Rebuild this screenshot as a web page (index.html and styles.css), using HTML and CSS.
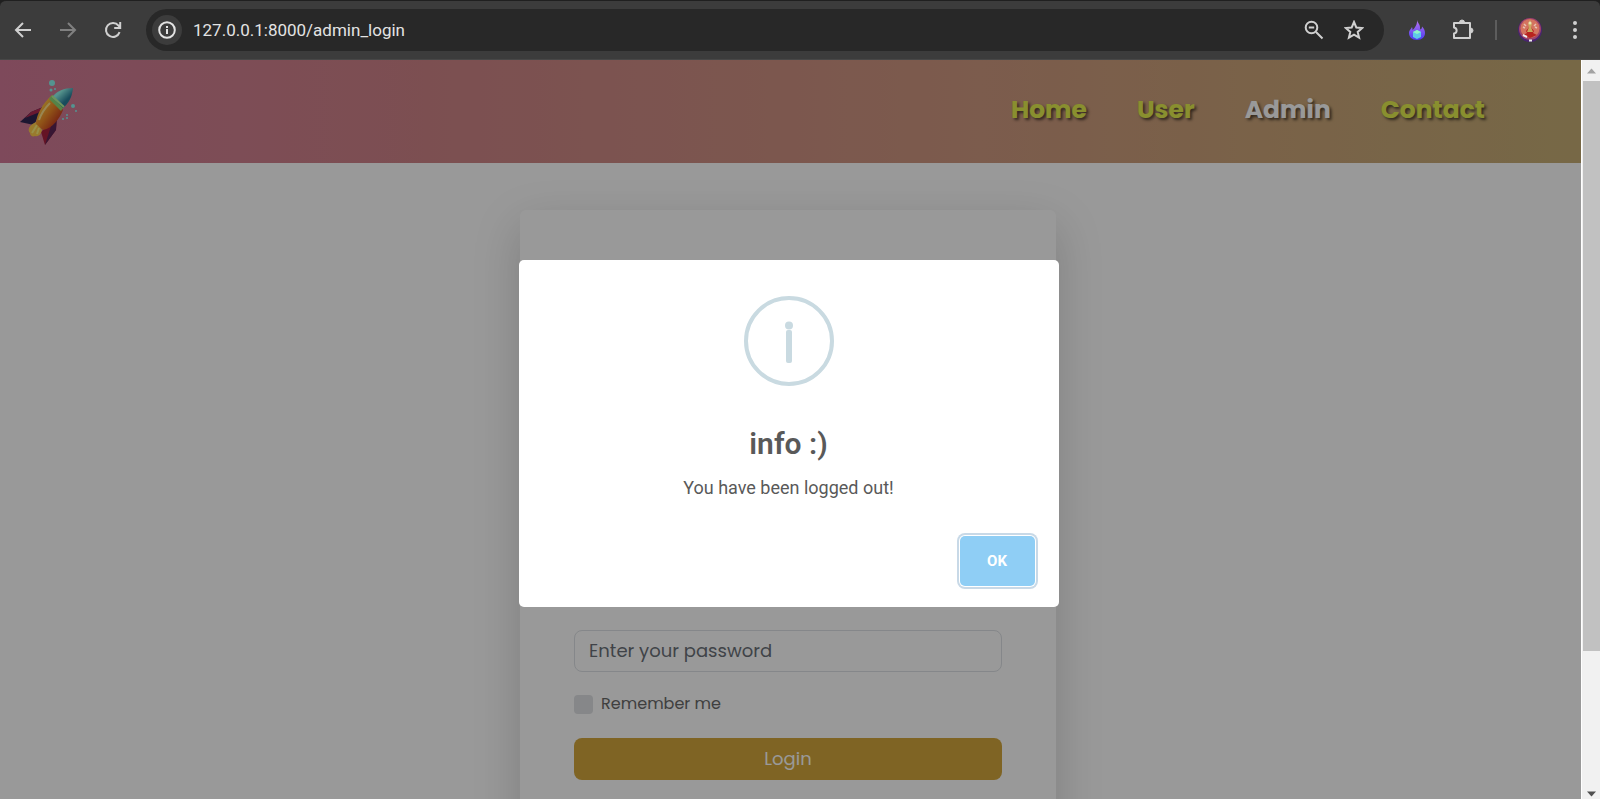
FILE: index.html
```html
<!DOCTYPE html>
<html lang="en">
<head>
<meta charset="utf-8">
<title>Admin Login</title>
<link rel="stylesheet" href="styles.css">
</head>
<body>
<div class="browser">
  <div class="toolbar">
    <div class="nav-buttons">
      <button class="tool" aria-label="Back"><svg width="18" height="18" viewBox="0 0 18 18"><path d="M17 9H2M9 2L2 9l7 7" fill="none" stroke="#d0d0d0" stroke-width="2"/></svg></button>
      <button class="tool" aria-label="Forward"><svg width="18" height="18" viewBox="0 0 18 18"><path d="M1 9h15M9 2l7 7-7 7" fill="none" stroke="#808080" stroke-width="2"/></svg></button>
      <button class="tool" aria-label="Reload"><svg width="18" height="18" viewBox="0 0 18 18"><path d="M15.600 11.200A7 7 0 1 1 14.500 4.600L16 6.300M16.200 1v6h-6" fill="none" stroke="#d0d0d0" stroke-width="2"/></svg></button>
    </div>
    <div class="omnibox">
      <button class="site-info" aria-label="Site information"><svg width="18" height="18" viewBox="0 0 18 18"><circle cx="9" cy="9" r="7.800" fill="none" stroke="#e3e3e3" stroke-width="2"/><path d="M8 8h2v5H8zM8 5h2v2H8z" fill="#e3e3e3"/></svg></button>
      <input class="url" type="text" aria-label="Address" value="127.0.0.1:8000/admin_login">
      <button class="tool" aria-label="Zoom"><svg width="20" height="20" viewBox="0 0 20 20"><g fill="none" stroke="#d0d0d0" stroke-width="2"><circle cx="7.500" cy="7.500" r="5.800"/><path d="M12 12l6.500 6.500M4.800 7.500h5.400"/></g></svg></button>
      <button class="tool" aria-label="Bookmark"><svg width="20" height="20" viewBox="0 0 20 20"><path d="M10 2l2.300 5.500 6 .5-4.600 3.900 1.400 5.800L10 14.600l-5.100 3.100 1.400-5.800L1.700 8l6-.5z" fill="none" stroke="#d0d0d0" stroke-width="2"/></svg></button>
    </div>
    <div class="extensions">
      <button class="tool" aria-label="Flame extension"><svg width="16" height="20" viewBox="0 0 16 20"><defs><linearGradient id="flame" x2="0" y2="1"><stop stop-color="#b873f0"/><stop offset="1" stop-color="#4b3df0"/></linearGradient></defs><path d="M8 0c0 2 3 4 3 7 0 1 0 2 .500 2.500C12.500 9 13 8 13 6.500c2 2 3 4 3 6.500 0 4-3 7-8 7s-8-3-8-7c0-3 2-3.500 3-6 .500 1 .500 2 .500 3C6 8 8.500 4 8 0z" fill="url(#flame)"/><path d="M8 10l4 2v5l-4 2-4-2v-5z" fill="#5fc8e8"/><path d="M8 10l4 2-4 2-4-2z" fill="#8ff5c8"/></svg></button>
      <button class="tool" aria-label="Extensions"><svg width="22" height="22" viewBox="0 0 22 22"><path d="M2 4h16v15H2v-4.500c3.500-.500 3.500-5.500 0-6z" fill="none" stroke="#d0d0d0" stroke-width="2" stroke-linejoin="round"/><path d="M7.500 3.500a2.500 2.500 0 0 1 5 0zM18.500 9a2.500 2.500 0 0 1 0 5z" fill="#d0d0d0" stroke="#d0d0d0"/></svg></button>
      <span class="divider"></span>
      <button class="tool" aria-label="Profile"><svg width="24" height="24" viewBox="0 0 24 24"><circle cx="12" cy="12" r="12" fill="#4a2470"/><circle cx="12" cy="11" r="11" fill="#a04468"/><circle cx="12" cy="10.500" r="9.500" fill="#d4735f"/><path d="M5 9l2 1M17 9l2 1M6 6l2 2M18 6l-2 2" stroke="#e8c0b0" stroke-width="1.500"/><path d="M12 8l4 5-1 2 4 2-7 3-7-3 4-2-1-2z" fill="#b8241f"/><path d="M12 2l2 4-1 3 2 5h-6l2-5-1-3z" fill="#c9a860"/><circle cx="12" cy="5" r="1.500" fill="#e8e0b0"/><path d="M5 17l4 2M11 22.500h3" stroke="#eee" stroke-width="2"/></svg></button>
      <button class="tool menu-button" aria-label="Menu"><svg width="4" height="18" viewBox="0 0 4 18"><g fill="#d0d0d0"><circle cx="2" cy="2" r="2"/><circle cx="2" cy="9" r="2"/><circle cx="2" cy="16" r="2"/></g></svg></button>
    </div>
  </div>
  <div class="viewport">
    <div class="page">
      <header class="site-header">
        <svg class="logo" width="60" height="68" viewBox="0 0 60 68">
          <defs>
            <linearGradient id="hull" x1="0" y1="0" x2="1" y2="1"><stop offset=".25" stop-color="#ffc43d"/><stop offset=".5" stop-color="#f08a28"/><stop offset=".8" stop-color="#c2381f"/></linearGradient>
            <linearGradient id="nose" x1="0" y1="0" x2="1" y2="1"><stop offset=".3" stop-color="#8ff5ea"/><stop offset=".65" stop-color="#287f9a"/></linearGradient>
          </defs>
          <path d="M24 29L12 34 1 44l14 3z" fill="#312652"/><path d="M24 29L12 34 6 40l15-6z" fill="#b02951"/>
          <path d="M22 54l4 13 11-15 1-14z" fill="#a8213e"/><path d="M26 67l11-15 1-14-6 10z" fill="#5c2556"/>
          <path d="M17 44c-7 3-9 8-6 11 0 3 3 4 5 3 3 1 6-1 7-6z" fill="#ffcb4c"/><path d="M18 47l-5 8M20 50l-2 6" stroke="#fff07a" stroke-width="2"/>
          <path d="M33 17C24 25 17 37 17 46l7 6c10-2 17-12 20-20z" fill="url(#hull)"/>
          <path d="M31 25c-6 6-9 11-11 17" fill="none" stroke="#ffe08a" stroke-width="2"/>
          <path d="M33 17l-3 4 12 12 3-5z" fill="#8fdb75"/>
          <path d="M54 10c-9 0-16 3-21 9l11 11c6-5 9-11 10-20z" fill="url(#nose)"/>
          <path d="M33 18l12 11" stroke="#b8f59a" stroke-width="2"/>
          <g fill="#8cf5f0"><circle cx="33" cy="5" r="3"/><circle cx="32" cy="12" r="1.500"/><circle cx="36" cy="11" r="1"/><circle cx="54" cy="28" r="2"/><circle cx="57" cy="33" r="1"/><circle cx="44" cy="41" r="1"/><circle cx="48" cy="40" r="1"/><circle cx="48" cy="37" r="1"/></g>
        </svg>
        <nav class="menu">
          <a href="#">Home</a>
          <a href="#">User</a>
          <a href="#" class="active">Admin</a>
          <a href="#">Contact</a>
        </nav>
      </header>
      <main class="content">
        <form class="card">
          <input class="field" type="password" placeholder="Enter your password" aria-label="Password">
          <div class="remember">
            <input type="checkbox" id="remember">
            <label for="remember">Remember me</label>
          </div>
          <button class="login" type="button">Login</button>
        </form>
      </main>
      <div class="overlay">
        <div class="modal" role="dialog" aria-labelledby="modal-title">
          <svg class="modal-icon" width="90" height="90" viewBox="0 0 90 90"><circle cx="45" cy="45" r="43" fill="none" stroke="#c9dae1" stroke-width="4"/><circle cx="45" cy="29.500" r="4" fill="#c9dae1"/><rect x="42" y="34" width="6" height="33" rx="2" fill="#c9dae1"/></svg>
          <h2 class="modal-title" id="modal-title">info :)</h2>
          <p class="modal-text">You have been logged out!</p>
          <div class="modal-footer"><button class="ok">OK</button></div>
        </div>
      </div>
    </div>
    <div class="scrollbar">
      <svg class="arrow" width="18" height="21" viewBox="0 0 18 21"><path d="M5 13.500l4.500-5 4.500 5z" fill="#a3a3a3"/></svg>
      <div class="track"><div class="thumb"></div></div>
      <svg class="arrow" width="18" height="10" viewBox="0 0 18 10"><path d="M5 2.500l4.500 5 4.500-5z" fill="#505050"/></svg>
    </div>
  </div>
</div>
</body>
</html>
```
FILE: styles.css
```css
* { box-sizing: border-box; }
body { margin: 0; font-family: Poppins, Inter, "Liberation Sans", sans-serif; }
button { border: 0; padding: 0; background: none; font-family: inherit; }
svg { display: block; }

.browser { display: flex; flex-direction: column; height: 100vh; overflow: hidden; background: #1f1f1f; }
.toolbar { display: flex; flex: none; align-items: center; height: 60px; padding: 0 23px 0 14px; border-top: 1px solid #202020; border-bottom: 1px solid #474747; border-radius: 6px 6px 0 0; background: #3c3c3c; }
.nav-buttons { display: flex; gap: 27px; margin-right: 24px; }
.omnibox { display: flex; flex: 1; align-items: center; gap: 20px; height: 42px; padding: 0 20px 0 6px; border-radius: 21px; background: #282828; }
.site-info { display: grid; place-items: center; width: 30px; height: 30px; border-radius: 50%; background: #3c3c3c; }
.url { flex: 1; min-width: 0; margin-left: -11px; padding: 0 2px; border: 0; outline: 0; background: none; color: #e3e3e3; font: 17px/24px Roboto, sans-serif; }
.extensions { display: flex; align-items: center; margin-left: 25px; gap: 27px; }
.divider { width: 2px; height: 20px; margin: 0 -6px; background: #5d5d5d; }
.menu-button { margin-left: 4px; }

.viewport { display: flex; flex: 1; min-height: 0; }
.page { position: relative; flex: 1; overflow: hidden; background: #fff; }
.site-header { display: flex; align-items: center; justify-content: space-between; height: 103px; padding: 0 96px 0 19px; background: linear-gradient(90deg, #d27b98, #cf8488 27%, #cf9980 62%, #cba479 80%, #c6ae76); }
.menu { display: flex; gap: 50px; padding-bottom: 3px; font-size: 25px; font-weight: 700; line-height: 36px; }
.menu a { color: #e4ee4f; text-decoration: none; text-shadow: 2px 2px 3px rgba(0, 0, 0, .6); }
.menu a.active { color: #fff; }

.content { display: flex; justify-content: center; padding: 47px 5px 0 0; }
.card { width: 34%; min-height: 700px; padding: 420px 54px 40px; border-radius: 6px; background: #fff; box-shadow: 0 16px 48px rgba(0, 0, 0, .18); }
.field { display: block; width: 100%; height: 42px; padding: 0 14px 2px; border: 1px solid #dee2e6; border-radius: 8px; background: #fff; font: 18px/26px Poppins, Inter, sans-serif; }
.field::placeholder { color: #6b7178; opacity: 1; }
.remember { display: flex; align-items: center; gap: 8px; margin: 20px 0 22px; font-size: 16px; line-height: 24px; color: #6a6a6a; }
.remember input { appearance: none; width: 19px; height: 19px; margin: 0; border-radius: 4px; background: #dfe2e4; }
.login { display: block; width: 100%; height: 42px; padding-bottom: 2px; border-radius: 8px; background: #d4a73c; color: #fff; font-size: 18px; }

.overlay { position: absolute; inset: 0; display: flex; align-items: center; justify-content: center; padding: 7px 4px 0 0; background: rgba(0, 0, 0, .4); }
.modal { width: 540px; max-width: 90%; padding: 36px 20px 21px; border-radius: 5px; background: #fff; font-family: Roboto, sans-serif; text-align: center; }
.modal-icon { margin: 0 auto; }
.modal-title { margin: 38px 0 0; color: #595959; font-size: 30px; font-weight: 600; line-height: 40px; }
.modal-text { margin: 12px 0 36px; color: #595959; font-size: 18px; line-height: 24px; }
.modal-footer { display: flex; justify-content: flex-end; padding-right: 4px; }
.ok { width: 75px; height: 50px; border-radius: 5px; background: #8fcef5; color: #fff; font-size: 15px; font-weight: 700; box-shadow: 0 0 0 1px #fff, 0 0 0 3px #c8d9e7; }

.scrollbar { display: flex; flex: none; flex-direction: column; width: 19px; border-left: 1px solid #fff; background: #f1f1f1; }
.arrow { flex: none; }
.track { flex: 1; padding-left: 1px; }
.thumb { height: 80.5%; background: #c1c1c1; }
```
